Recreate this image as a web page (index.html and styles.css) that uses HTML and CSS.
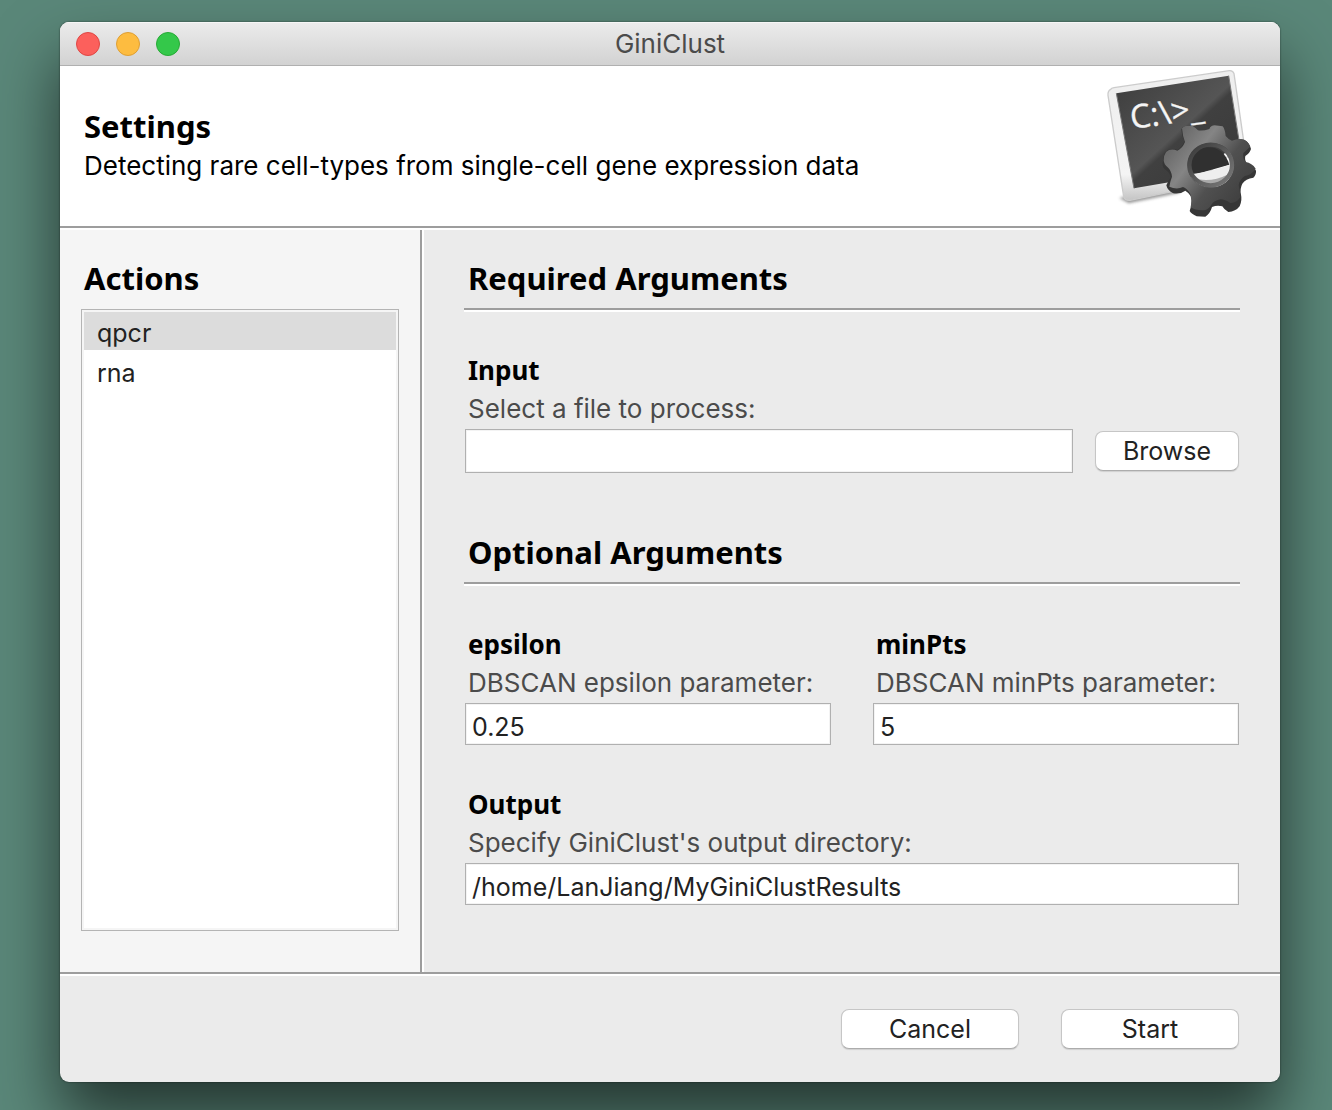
FILE: index.html
```html
<!DOCTYPE html>
<html lang="en">
<head>
<meta charset="utf-8">
<title>GiniClust</title>
<link rel="stylesheet" href="styles.css">
</head>
<body>
<main class="window">
  <div class="titlebar">
    <div class="lights">
      <button class="light close" type="button" aria-label="Close"></button>
      <button class="light minimize" type="button" aria-label="Minimize"></button>
      <button class="light zoom" type="button" aria-label="Zoom"></button>
    </div>
    <span class="window-title">GiniClust</span>
  </div>

  <header class="header">
    <div>
      <h1 class="heading">Settings</h1>
      <p class="subtitle">Detecting rare cell-types from single-cell gene expression data</p>
    </div>
    <svg class="logo" viewBox="30 18 480 480" aria-hidden="true">
      <defs>
        <linearGradient id="screen" x1="0" y1="0" x2="1" y2="1">
          <stop offset="0" stop-color="#3c3c3c"/><stop offset=".5" stop-color="#555"/><stop offset=".54" stop-color="#404040"/><stop offset="1" stop-color="#383838"/>
        </linearGradient>
        <linearGradient id="frame" x1="0" y1="0" x2="0" y2="1">
          <stop offset="0" stop-color="#eee"/><stop offset=".8" stop-color="#f4f4f4"/><stop offset="1" stop-color="#c4c4c4"/>
        </linearGradient>
        <linearGradient id="gear" x1="0" y1=".1" x2="1" y2=".8">
          <stop offset="0" stop-color="#5c5c5c"/><stop offset=".35" stop-color="#858585"/><stop offset=".62" stop-color="#505050"/><stop offset="1" stop-color="#3c3c3c"/>
        </linearGradient>
        <linearGradient id="ring" x1="0" y1="0" x2="1" y2="1">
          <stop offset="0" stop-color="#3a3a3a"/><stop offset="1" stop-color="#7a7a7a"/>
        </linearGradient>
        <filter id="soft" x="-20%" y="-20%" width="140%" height="140%"><feGaussianBlur stdDeviation="5"/></filter>
      </defs>
      <path d="M88 414 L116 430 L270 398 L250 370 Z" fill="#555" opacity=".6" filter="url(#soft)"/>
      <path d="M62 88 Q64 84 72 83 L418 32 Q429 31 432 41 L462 250 L300 384 L120 421 Q104 422 101 410 L54 106 Q53 92 62 88 Z" fill="url(#frame)" stroke="#ccc" stroke-width="4"/>
      <path d="M79 100 L416 47 L448 250 L290 358 L132 385 Z" fill="url(#screen)"/>
      <path d="M79 100 L132 385 M416 47 L447 240" fill="none" stroke="#777" stroke-width="3"/>
      <text class="prompt" x="125" y="207" transform="rotate(-8 125 207)">C:\&gt;_</text>
      <path fill-rule="evenodd" d="M274 208 Q276 200 286 198 L307 197 Q317 203 324 211 Q340 213 358 207 Q362 196 374 196 L398 199 Q405 207 407 228 Q415 238 426 242 Q444 234 462 239 Q480 249 483 267 Q479 280 466 288 Q463 300 471 311 Q490 316 498 332 Q499 344 490 353 Q467 356 457 371 Q449 387 453 404 Q457 420 449 439 Q437 455 415 456 Q402 449 397 439 Q382 434 366 441 Q361 460 346 470 L320 469 Q304 462 299 453 Q307 431 304 411 Q297 398 286 392 Q272 403 250 400 Q232 391 229 376 Q235 362 243 351 Q239 338 229 331 Q217 323 218 311 Q219 288 226 276 Q240 262 262 270 Q277 262 283 244 Q275 226 274 208 Z M365 249 C323 249 293 279 293 315 C293 356 325 382 364 382 C403 382 431 354 431 315 C431 277 402 249 365 249 Z" fill="#363636"/>
      <path fill-rule="evenodd" d="M276 205 Q280 199 287 198 L307 197 Q317 203 324 211 Q340 213 358 207 Q362 196 374 196 L398 199 Q405 207 407 228 Q415 238 426 242 Q444 234 462 239 Q475 243 480 260 Q470 270 460 279 Q457 294 467 306 Q486 309 497 326 Q486 344 464 348 Q448 359 446 376 Q450 394 451 412 Q439 430 421 429 Q405 418 392 418 Q373 421 364 434 Q356 448 342 451 Q316 452 302 442 Q307 422 301 402 Q292 386 279 381 Q260 390 238 380 Q240 366 246 350 Q244 332 233 322 Q222 314 221 301 Q221 286 228 276 Q242 264 262 272 Q277 266 285 246 Q278 229 276 205 Z M365 249 C323 249 293 279 293 315 C293 356 325 382 364 382 C403 382 431 354 431 315 C431 277 402 249 365 249 Z" fill="url(#gear)"/>
      <path d="M303 318 Q302 272 345 262 Q400 257 418 314 L312 344 Z" fill="#303030"/>
      <path d="M308 342 Q365 335 417 315 Q418 336 408 352 Q380 368 336 363 Q318 357 308 342 Z" fill="#eee"/>
      <path d="M326 358 Q370 365 412 344 Q394 374 362 374 Q340 372 326 358 Z" fill="#aaa"/>
      <ellipse cx="362" cy="315" rx="64" ry="61" fill="none" stroke="url(#ring)" stroke-width="13"/>
    </svg>
  </header>

  <div class="content">
    <aside class="sidebar">
      <h2 class="heading"><label for="actions">Actions</label></h2>
      <select class="actions" id="actions" size="2">
        <option selected>qpcr</option>
        <option>rna</option>
      </select>
    </aside>

    <form class="panel" id="settings">
      <section class="section">
        <h2 class="heading ruled">Required Arguments</h2>
        <div class="field">
          <label class="name" for="input">Input</label>
          <p class="hint">Select a file to process:</p>
          <div class="file-row">
            <input class="text tall" id="input" type="text">
            <button class="button" type="button">Browse</button>
          </div>
        </div>
      </section>

      <section class="section">
        <h2 class="heading ruled">Optional Arguments</h2>
        <div class="fields">
          <div class="field">
            <label class="name" for="epsilon">epsilon</label>
            <p class="hint">DBSCAN epsilon parameter:</p>
            <input class="text" id="epsilon" type="text" value="0.25">
          </div>
          <div class="field">
            <label class="name" for="minpts">minPts</label>
            <p class="hint">DBSCAN minPts parameter:</p>
            <input class="text" id="minpts" type="text" value="5">
          </div>
          <div class="field wide">
            <label class="name" for="output">Output</label>
            <p class="hint">Specify GiniClust's output directory:</p>
            <input class="text" id="output" type="text" value="/home/LanJiang/MyGiniClustResults">
          </div>
        </div>
      </section>
    </form>
  </div>

  <footer class="footer">
    <button class="button large" type="button">Cancel</button>
    <button class="button large" type="submit" form="settings">Start</button>
  </footer>
</main>
</body>
</html>
```
FILE: styles.css
```css
* {
  box-sizing: border-box;
}

body {
  margin: 0;
  min-height: 100vh;
  display: flex;
  padding: 22px 52px 28px 60px;
  background: #5a8779;
  color: #000;
  font: 26px/38px Inter, "Liberation Sans", sans-serif;
}

h1, h2, p {
  margin: 0;
}

input, select, button {
  margin: 0;
  font: inherit;
  font-size: 25px;
  color: #222;
}

.window {
  flex: 1;
  min-width: 0;
  display: flex;
  flex-direction: column;
  border-radius: 9px;
  overflow: hidden;
  background: #ebebeb;
  box-shadow: 0 0 2px rgba(0, 0, 0, .6), 0 36px 64px rgba(0, 0, 0, .6);
}

/* Title bar */
.titlebar {
  display: grid;
  grid-template-columns: 1fr auto 1fr;
  align-items: center;
  height: 44px;
  padding: 0 16px;
  background: linear-gradient(#ececec, #d2d2d2);
  border-bottom: 1px solid #b0b0b0;
  box-shadow: inset 0 1px #f6f6f6;
}

.lights {
  display: flex;
  gap: 16px;
}

.light {
  width: 24px;
  height: 24px;
  padding: 0;
  border: 1px solid;
  border-radius: 50%;
}

.close {
  background: #fc605c;
  border-color: #df4744;
}

.minimize {
  background: #fdbc40;
  border-color: #de9f34;
}

.zoom {
  background: #34c84a;
  border-color: #27aa35;
}

.window-title {
  color: #4b4b4b;
}

/* Header */
.header {
  display: flex;
  align-items: center;
  justify-content: space-between;
  padding: 0 20px 0 24px;
  background: #fff;
  border-bottom: 2px solid #9d9d9d;
}

.heading {
  font: 700 31px/38px "Noto Sans", "Open Sans", sans-serif;
  padding-bottom: 2px;
}

.subtitle {
  line-height: 38px;
}

.logo {
  width: 160px;
  height: 160px;
  flex: none;
}

.prompt {
  font: 98px "Open Sans", sans-serif;
  fill: #f5f5f5;
  stroke: #f5f5f5;
  stroke-width: 1px;
}

/* Content */
.content {
  flex: 1;
  display: flex;
  border-top: 2px solid #fff;
  border-bottom: 2px solid #9d9d9d;
}

.sidebar {
  width: 362px;
  flex: none;
  display: flex;
  flex-direction: column;
  gap: 10px;
  padding: 29px 21px 41px;
  background: #f5f5f5;
  border-right: 2px solid #9d9d9d;
}

.sidebar .heading {
  padding-left: 3px;
}

.actions {
  flex: 1;
  padding: 2px;
  border: 1px solid #b4b4b4;
  border-radius: 0;
  outline: 0;
  background: #fff;
  box-shadow: inset 0 0 0 2px #f5f5f5;
  overflow: hidden;
}

.actions option {
  height: 38px;
  margin-bottom: 2px;
  padding: 6px 13px 0;
  color: #222;
}

.actions option:checked {
  background: #dcdcdc linear-gradient(#dcdcdc, #dcdcdc);
}

.panel {
  flex: 1;
  min-width: 0;
  display: flex;
  flex-direction: column;
  gap: 60px;
  padding: 29px 40px;
  border-left: 2px solid #fff;
}

.section {
  display: flex;
  flex-direction: column;
  gap: 40px;
}

.ruled {
  padding: 0 4px 11px;
  border-bottom: 2px solid #9d9d9d;
  box-shadow: 0 2px #fff;
  margin-bottom: 2px;
}

.section > .field, .fields {
  margin: 0 1px;
}

.fields {
  display: grid;
  grid-template-columns: 1fr 1fr;
  gap: 41px 42px;
}

.wide {
  grid-column: 1 / -1;
}

.name {
  display: block;
  padding: 0 3px 2px;
  font: 700 26px/36px "Noto Sans", "Open Sans", sans-serif;
}

.hint {
  padding-left: 3px;
  margin-bottom: 1px;
  color: #4b4b4b;
}

.text {
  display: block;
  width: 100%;
  min-width: 0;
  height: 42px;
  padding: 5px 6px 0;
  border: 1px solid #b0b0b0;
  border-radius: 0;
  background: #fff;
  box-shadow: inset 0 0 0 1px #f3f3f3;
}

.tall {
  height: 44px;
}

.file-row {
  display: flex;
  align-items: center;
  gap: 22px;
}

.button {
  width: 144px;
  height: 40px;
  flex: none;
  padding: 0;
  border: 1px solid #c6c6c6;
  border-bottom-color: #acacac;
  border-radius: 8px;
  background: #fff;
  box-shadow: 0 1px 1px rgba(0, 0, 0, .12);
  line-height: 36px;
}

.large {
  width: 178px;
}

.footer {
  display: flex;
  justify-content: flex-end;
  gap: 42px;
  padding: 33px 41px;
  border-top: 2px solid #fff;
}
```
